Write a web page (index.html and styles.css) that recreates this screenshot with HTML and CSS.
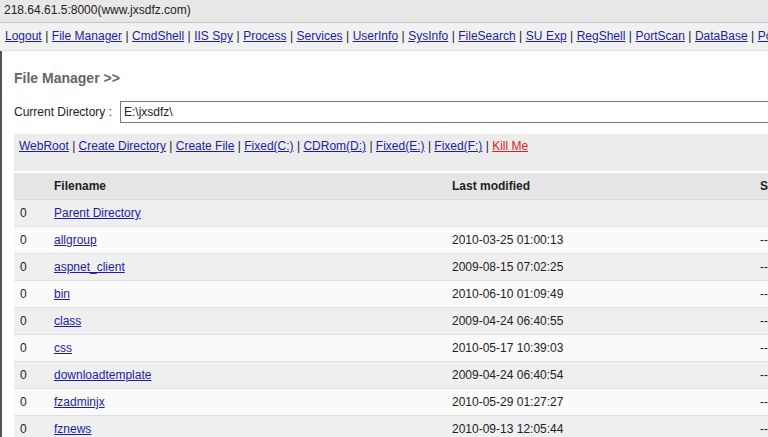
FILE: index.html
```html
<!DOCTYPE html>
<html lang="en">
<head>
    <meta charset="UTF-8">
    <title>218.64.61.5:8000(www.jxsdfz.com)</title>
    <link rel="stylesheet" href="styles.css">
</head>
<body>
    <div class="titlebar">218.64.61.5:8000(www.jxsdfz.com)</div>

    <div class="nav">
        <a href="#">Logout</a> | <a href="#">File Manager</a> | <a href="#">CmdShell</a> | <a href="#">IIS Spy</a> | <a href="#">Process</a> | <a href="#">Services</a> | <a href="#">UserInfo</a> | <a href="#">SysInfo</a> | <a href="#">FileSearch</a> | <a href="#">SU Exp</a> | <a href="#">RegShell</a> | <a href="#">PortScan</a> | <a href="#">DataBase</a> | <a href="#">PortMap</a>
    </div>

    <div class="main">
        <h2 class="page-title">File Manager &gt;&gt;</h2>

        <div class="dir-row">
            <label class="dir-label">Current Directory :</label>
            <input class="dir-input" type="text" value="E:\jxsdfz\">
        </div>

        <div class="toolbar">
            <a href="#">WebRoot</a> | <a href="#">Create Directory</a> | <a href="#">Create File</a> | <a href="#">Fixed(C:)</a> | <a href="#">CDRom(D:)</a> | <a href="#">Fixed(E:)</a> | <a href="#">Fixed(F:)</a> | <a href="#" class="kill">Kill Me</a>
        </div>

        <table class="files">
            <tr class="head">
                <th class="c-check"></th>
                <th class="c-name">Filename</th>
                <th class="c-date">Last modified</th>
                <th class="c-size">Size</th>
            </tr>
            <tr class="alt">
                <td class="c-check">0</td>
                <td class="c-name"><a href="#">Parent Directory</a></td>
                <td class="c-date"></td>
                <td class="c-size"></td>
            </tr>
            <tr>
                <td class="c-check">0</td>
                <td class="c-name"><a href="#">allgroup</a></td>
                <td class="c-date">2010-03-25 01:00:13</td>
                <td class="c-size">--</td>
            </tr>
            <tr class="alt">
                <td class="c-check">0</td>
                <td class="c-name"><a href="#">aspnet_client</a></td>
                <td class="c-date">2009-08-15 07:02:25</td>
                <td class="c-size">--</td>
            </tr>
            <tr>
                <td class="c-check">0</td>
                <td class="c-name"><a href="#">bin</a></td>
                <td class="c-date">2010-06-10 01:09:49</td>
                <td class="c-size">--</td>
            </tr>
            <tr class="alt">
                <td class="c-check">0</td>
                <td class="c-name"><a href="#">class</a></td>
                <td class="c-date">2009-04-24 06:40:55</td>
                <td class="c-size">--</td>
            </tr>
            <tr>
                <td class="c-check">0</td>
                <td class="c-name"><a href="#">css</a></td>
                <td class="c-date">2010-05-17 10:39:03</td>
                <td class="c-size">--</td>
            </tr>
            <tr class="alt">
                <td class="c-check">0</td>
                <td class="c-name"><a href="#">downloadtemplate</a></td>
                <td class="c-date">2009-04-24 06:40:54</td>
                <td class="c-size">--</td>
            </tr>
            <tr>
                <td class="c-check">0</td>
                <td class="c-name"><a href="#">fzadminjx</a></td>
                <td class="c-date">2010-05-29 01:27:27</td>
                <td class="c-size">--</td>
            </tr>
            <tr class="alt">
                <td class="c-check">0</td>
                <td class="c-name"><a href="#">fznews</a></td>
                <td class="c-date">2010-09-13 12:05:44</td>
                <td class="c-size">--</td>
            </tr>
        </table>
    </div>
</body>
</html>
```

FILE: styles.css
```css
html, body {
    margin: 0;
    padding: 0;
    overflow: hidden;
}

body {
    font-family: "Liberation Sans", Arial, sans-serif;
    font-size: 12px;
    color: #222;
    background: #fff;
    width: 1000px;
}

a {
    color: #1c1ca6;
    text-decoration: underline;
}

.titlebar {
    height: 22px;
    line-height: 20px;
    padding-left: 4px;
    background: #e8e8e8;
    border-bottom: 1px solid #c4c4c4;
}

.nav {
    height: 27px;
    line-height: 27px;
    padding-left: 5px;
    background: #f1f1f1;
    border-bottom: 1px solid #e2e2e2;
    white-space: nowrap;
    word-spacing: 0.15px;
}

.main {
    border-left: 2px solid #555;
    padding-left: 12px;
    padding-top: 19px;
    white-space: nowrap;
}

.page-title {
    margin: 0;
    font-size: 14px;
    font-weight: bold;
    color: #666;
    line-height: 17px;
}

.dir-row {
    display: flex;
    align-items: center;
    margin-top: 14px;
}

.dir-label {
    width: 106px;
}

.dir-input {
    width: 800px;
    height: 22px;
    box-sizing: border-box;
    border: 1px solid #777;
    padding: 0 3px;
    font-family: "Liberation Sans", Arial, sans-serif;
    font-size: 12px;
    color: #222;
    background: #fff;
}

.toolbar {
    margin-top: 11px;
    height: 37px;
    padding: 5px 5px 0;
    box-sizing: border-box;
    background: #ececec;
    line-height: 14px;
}

.kill {
    color: #e02020;
}

.files {
    margin-top: 2px;
    width: 986px;
    border-collapse: collapse;
}

.files th,
.files td {
    height: 26px;
    padding: 0;
    text-align: left;
    border-bottom: 1px solid #e0e0e0;
}

.files th {
    font-weight: bold;
    background: #e5e5e5;
    border-bottom-color: #d6d6d6;
}

.files tr td {
    background: #fafafa;
}

.files tr.alt td {
    background: #efefef;
}

.c-check {
    width: 34px;
    padding-left: 6px !important;
}

.c-name {
    width: 398px;
}

.c-date {
    width: 308px;
}
```
